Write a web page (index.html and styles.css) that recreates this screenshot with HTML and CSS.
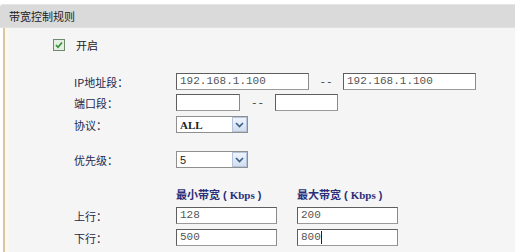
FILE: index.html
```html
<!DOCTYPE html>
<html>
<head>
<meta charset="utf-8">
<link rel="stylesheet" href="styles.css">
</head>
<body>
<div class="panel">
  <div class="head">带宽控制规则</div>
  <div class="body">
    <div class="check-row">
      <span class="cbox"><svg width="12" height="12" viewBox="0 0 12 12"><rect x="0.5" y="0.5" width="11" height="11" fill="#e4efe4" stroke="#6d8a6d"/><path d="M3 6 L5 8.3 L9 3.6" fill="none" stroke="#2f8f2f" stroke-width="1.6"/></svg></span>
      <span class="lbl">开启</span>
    </div>
    <div class="row r-ip">
      <span class="label">IP地址段：</span>
      <span class="inp w133">192.168.1.100</span>
      <span class="dash">--</span>
      <span class="inp w133">192.168.1.100</span>
    </div>
    <div class="row r-port">
      <span class="label">端口段：</span>
      <span class="inp w64"></span>
      <span class="dash d2">--</span>
      <span class="inp w63"></span>
    </div>
    <div class="row r-proto">
      <span class="label">协议：</span>
      <span class="sel"><span class="sv serif">ALL</span><span class="arrow"><svg width="9" height="6" viewBox="0 0 9 6"><path d="M1 1 L4.5 4.5 L8 1" fill="none" stroke="#3b5f8a" stroke-width="1.6"/></svg></span></span>
    </div>
    <div class="row r-prio">
      <span class="label">优先级：</span>
      <span class="sel"><span class="sv">5</span><span class="arrow"><svg width="9" height="6" viewBox="0 0 9 6"><path d="M1 1 L4.5 4.5 L8 1" fill="none" stroke="#3b5f8a" stroke-width="1.6"/></svg></span></span>
    </div>
    <div class="row r-bwhead">
      <span class="label"></span>
      <span class="colh">最小带宽<span class="par">(</span><span class="serif">Kbps</span><span class="par">)</span></span>
      <span class="colh">最大带宽<span class="par">(</span><span class="serif">Kbps</span><span class="par">)</span></span>
    </div>
    <div class="row r-up">
      <span class="label">上行：</span>
      <span class="inp w101">128</span>
      <span class="inp w101 second">200</span>
    </div>
    <div class="row r-down">
      <span class="label">下行：</span>
      <span class="inp w101">500</span>
      <span class="inp w101 second">800<span class="caret"></span></span>
    </div>
  </div>
</div>
</body>
</html>
```
FILE: styles.css
```css
html, body {
  margin: 0;
  padding: 0;
  background: #ffffff;
  width: 515px;
  height: 252px;
  overflow: hidden;
  font-family: "Noto Sans CJK SC", "Noto Sans", sans-serif;
  font-size: 11px;
}
.panel {
  padding-top: 4px;
}
.head {
  height: 22px;
  line-height: 22px;
  background: #dadada;
  border-top: 1px solid #e6e6e6;
  border-bottom: 1px solid #e2e2e2;
  padding-left: 9px;
  color: #222;
  font-size: 11px;
  border-top-left-radius: 3px;
}
.body {
  margin-left: 3px;
  border-left: 2px solid #d8c7a0;
  background: #f5f5f5;
  height: 230px;
  box-shadow: inset 4px 0 0 #fbf8f0;
}
.check-row {
  display: flex;
  align-items: center;
  padding-left: 48px;
  padding-top: 11px;
  height: 12px;
}
.cbox {
  width: 12px;
  height: 12px;
  display: block;
}
.cbox svg { display: block; }
.lbl {
  margin-left: 11px;
  color: #222;
}
.row {
  display: flex;
  align-items: center;
  height: 17px;
  padding-left: 69px;
}
.label {
  width: 102px;
  color: #24284a;
  flex: none;
}
.r-ip { margin-top: 22px; }
.r-port { margin-top: 4px; }
.r-proto { margin-top: 5px; }
.r-prio { margin-top: 18px; }
.r-bwhead { margin-top: 18px; height: 16px; }
.r-up { margin-top: 5px; }
.r-down { margin-top: 5px; }
.inp {
  box-sizing: border-box;
  height: 17px;
  background: #fff;
  border: 1px solid #5e5e5e;
  border-right-color: #8a8a8a;
  border-bottom-color: #9a9a9a;
  font-family: "Liberation Mono", monospace;
  font-size: 11px;
  color: #555;
  line-height: 15px;
  padding-left: 3px;
  flex: none;
  position: relative;
}
.w133 { width: 133px; }
.w64 { width: 64px; }
.w63 { width: 63px; }
.w101 { width: 101px; }
.second { margin-left: 20px; }
.dash {
  width: 34px;
  text-align: center;
  color: #444;
  font-family: "Liberation Mono", monospace;
  font-size: 11px;
}
.d2 { width: 35px; }
.sel {
  box-sizing: border-box;
  width: 72px;
  height: 17px;
  background: #fff;
  border: 1px solid #8f8f8f;
  display: flex;
  align-items: center;
  justify-content: space-between;
}
.sv {
  padding-left: 3px;
  color: #222;
  font-size: 11px;
  font-family: "Liberation Sans", sans-serif;
}
.sv.serif { font-family: "Liberation Serif", serif; font-weight: bold; }
.arrow {
  width: 15px;
  height: 15px;
  box-sizing: border-box;
  background: linear-gradient(#eef4fc, #d2deef);
  border: 1px solid #b3c4dc;
  display: flex;
  align-items: center;
  justify-content: center;
}
.arrow svg { display: block; }
.colh {
  width: 121px;
  color: #2a2f7a;
  font-weight: bold;
  font-size: 11px;
  flex: none;
}
.par {
  font-family: "Liberation Sans", sans-serif;
  padding: 0 3px;
}
.serif { font-family: "Liberation Serif", serif; }
.caret {
  display: inline-block;
  width: 1px;
  height: 13px;
  background: #222;
  vertical-align: top;
  margin-top: 1px;
}
```
